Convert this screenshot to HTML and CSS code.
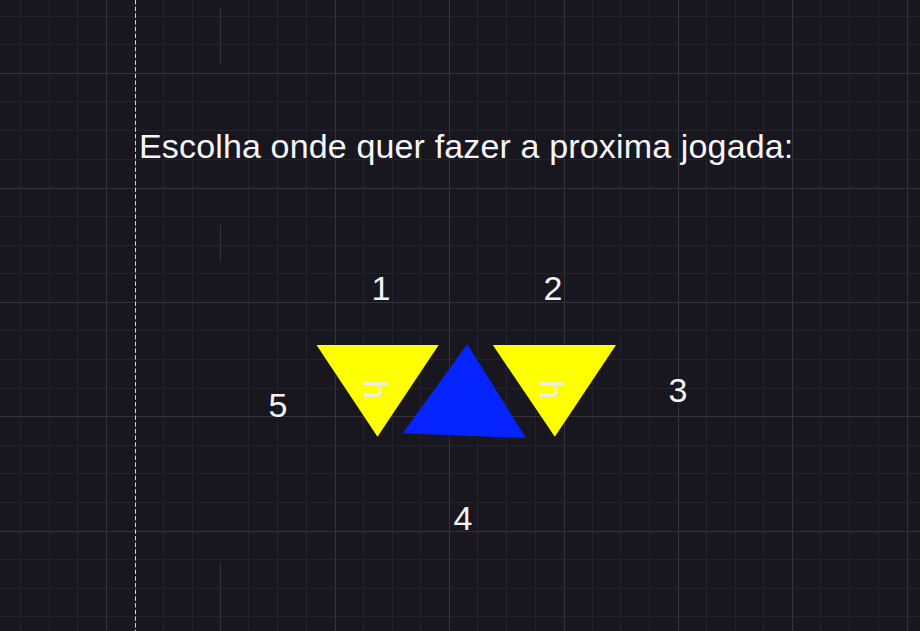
FILE: index.html
```html
<!DOCTYPE html>
<html lang="pt">
<head>
<meta charset="utf-8">
<title>Jogada</title>
<link rel="stylesheet" href="styles.css">
</head>
<body>
<div class="stage">
  <svg class="grid" width="920" height="631" viewBox="0 0 920 631" aria-hidden="true">
    <path class="minor" d="M20.5 0V631M49.5 0V631M77.5 0V631M163.5 0V631M192.5 0V631M248.5 0V631M277.5 0V631M306.5 0V631M363.5 0V631M392.5 0V631M420.5 0V631M477.5 0V631M506.5 0V631M535.5 0V631M592.5 0V631M620.5 0V631M649.5 0V631M706.5 0V631M735.5 0V631M763.5 0V631M820.5 0V631M849.5 0V631M878.5 0V631M0 16.5H920M0 44.5H920M0 101.5H920M0 130.5H920M0 159.5H920M0 216.5H920M0 245.5H920M0 273.5H920M0 330.5H920M0 359.5H920M0 388.5H920M0 445.5H920M0 473.5H920M0 502.5H920M0 559.5H920M0 588.5H920M0 616.5H920"/>
    <path class="major" d="M106.5 0V631M335.5 0V631M449.5 0V631M564.5 0V631M678.5 0V631M792.5 0V631M907.5 0V631M0 73.5H920M0 188.5H920M0 302.5H920M0 416.5H920M0 531.5H920M220.5 8V64M220.5 225V262M220.5 562V631"/>
    <path class="guide" d="M135.5 0V631"/>
  </svg>
  <main class="content">
    <h1 class="prompt">Escolha onde quer fazer a proxima jogada:</h1>
    <div class="board">
      <span class="slot slot-1">1</span>
      <span class="slot slot-2">2</span>
      <span class="slot slot-3">3</span>
      <span class="slot slot-4">4</span>
      <span class="slot slot-5">5</span>
      <svg class="pieces" width="340" height="120" viewBox="0 0 340 120">
        <polygon class="yellow" points="16.5,15 138.7,15 77.5,106.7"/>
        <polygon class="blue" points="167.3,14 102.7,103.3 226,108"/>
        <polygon class="yellow" points="192.8,15 316,15 254.8,106.7"/>
        <text class="mark" transform="translate(63.5 50) rotate(90)">h</text>
        <text class="mark" transform="translate(240.2 50) rotate(90)">h</text>
      </svg>
    </div>
  </main>
</div>
</body>
</html>
```

FILE: styles.css
```css
html, body {
  margin: 0;
  padding: 0;
  background: #18161f;
}

body {
  font-family: "Liberation Sans", Arial, sans-serif;
  color: #f4f4f6;
}

.stage {
  position: relative;
  width: 920px;
  height: 631px;
  overflow: hidden;
  background: #18161f;
}

.grid {
  position: absolute;
  left: 0;
  top: 0;
  display: block;
}

.grid .minor {
  stroke: #24222a;
  stroke-width: 1;
  fill: none;
}

.grid .major {
  stroke: #333139;
  stroke-width: 1;
  fill: none;
}

.grid .guide {
  stroke: #d4d3d8;
  stroke-width: 1;
  stroke-dasharray: 4.5 2.2;
  fill: none;
}

.content {
  position: relative;
  padding: 126px 0 0 139px;
}

.prompt {
  margin: 0;
  font-size: 34px;
  line-height: 40px;
  font-weight: 400;
  letter-spacing: 0.15px;
  color: #f6f6f8;
  white-space: nowrap;
}

.board {
  position: relative;
  height: 440px;
}

.slot {
  position: absolute;
  width: 40px;
  text-align: center;
  font-size: 34px;
  line-height: 40px;
  color: #f4f4f6;
}

/* board origin is at page (139, 166) */
.slot-1 { left: 222px; top: 102px; }
.slot-2 { left: 394px; top: 102px; }
.slot-3 { left: 519px; top: 204px; }
.slot-4 { left: 304px; top: 332px; }
.slot-5 { left: 119px; top: 219px; }

.pieces {
  position: absolute;
  left: 161px;
  top: 164px;
  display: block;
}

.yellow { fill: #ffff00; }
.blue { fill: #0524ff; }

.mark {
  font-family: "Liberation Sans", Arial, sans-serif;
  font-size: 34px;
  fill: #eeeeee;
}
```
